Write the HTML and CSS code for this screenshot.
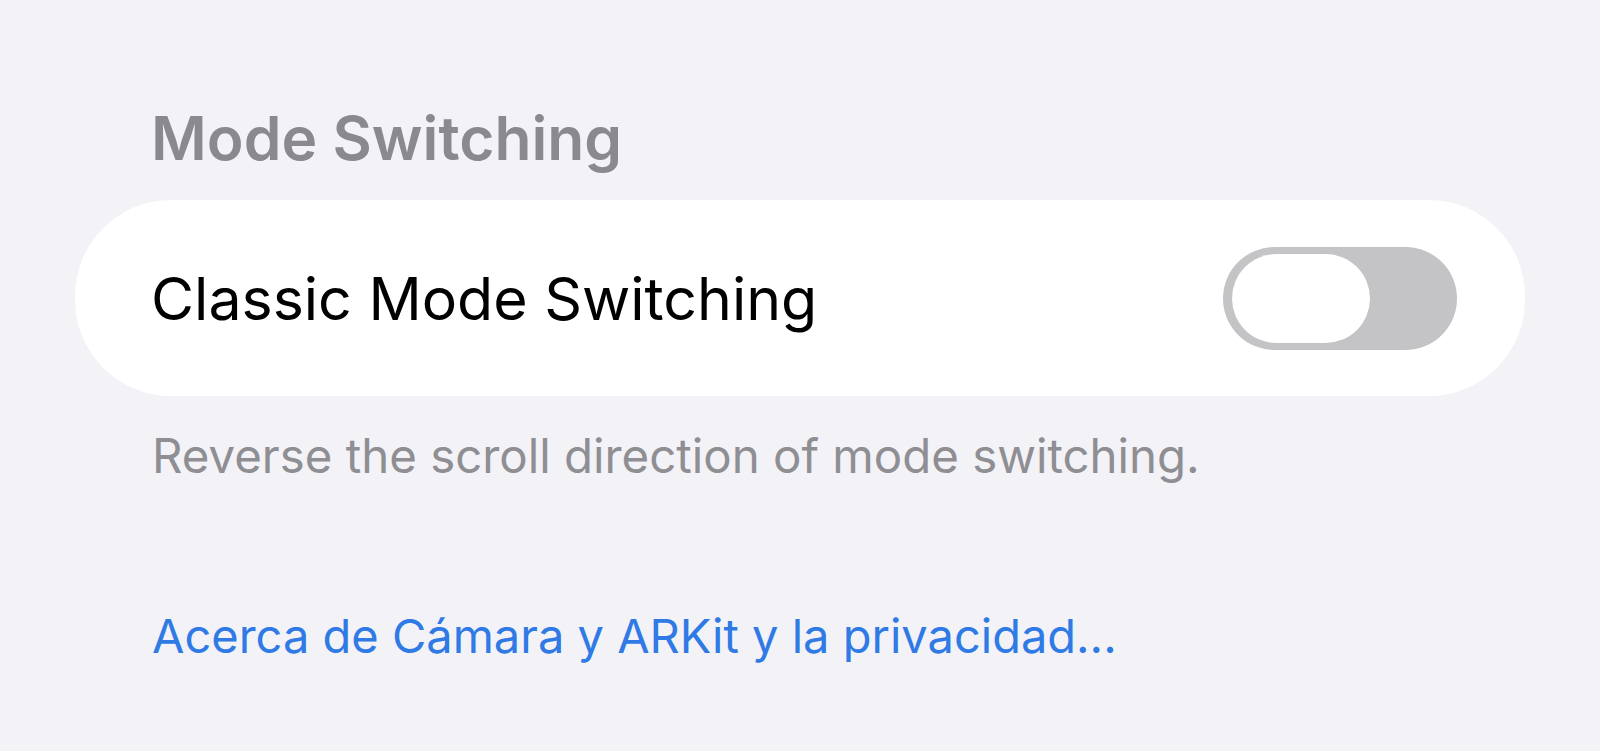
FILE: index.html
```html
<!DOCTYPE html>
<html lang="es">
<head>
    <meta charset="UTF-8">
    <meta name="viewport" content="width=device-width, initial-scale=1.0">
    <title>Mode Switching</title>
    <link rel="stylesheet" href="styles.css">
</head>
<body>
    <div class="ajustes">
        <h2 class="seccion-titulo">Mode Switching</h2>
        <div class="tarjeta">
            <span class="fila-texto">Classic Mode Switching</span>
            <div class="interruptor" role="switch" aria-checked="false">
                <div class="perilla"></div>
            </div>
        </div>
        <p class="seccion-nota">Reverse the scroll direction of mode switching.</p>
        <a class="enlace" href="#">Acerca de Cámara y ARKit y la privacidad...</a>
    </div>
</body>
</html>
```

FILE: styles.css
```css
body {
    margin: 0;
    background: #f2f2f7;
    font-family: 'Inter', 'Noto Sans', sans-serif;
    height: 751px;
    overflow: hidden;
}

.ajustes {
    padding: 102px 0 0 75px;
    width: 1450px;
}

.seccion-titulo {
    margin: 0 0 26px 76px;
    font-size: 60.5px;
    line-height: 72px;
    font-weight: 600;
    color: #8a8a8e;
}

.tarjeta {
    height: 196px;
    background: #ffffff;
    border-radius: 96px;
    padding: 0 68px 0 76px;
    display: flex;
    align-items: center;
    justify-content: space-between;
}

.fila-texto {
    font-size: 59px;
    color: #000;
}

.interruptor {
    width: 234px;
    height: 103px;
    box-sizing: border-box;
    padding: 7px 9px;
    border-radius: 52px;
    background: #c4c4c7;
    display: flex;
    align-items: center;
}

.perilla {
    width: 138px;
    height: 89px;
    border-radius: 45px;
    background: #ffffff;
}

.seccion-nota {
    margin: 30px 0 0 77px;
    font-size: 47.4px;
    line-height: 60px;
    color: #8e8e93;
}

.enlace {
    display: block;
    margin: 120px 0 0 77px;
    font-size: 47px;
    line-height: 60px;
    color: #2f7ae5;
    text-decoration: none;
}
```
